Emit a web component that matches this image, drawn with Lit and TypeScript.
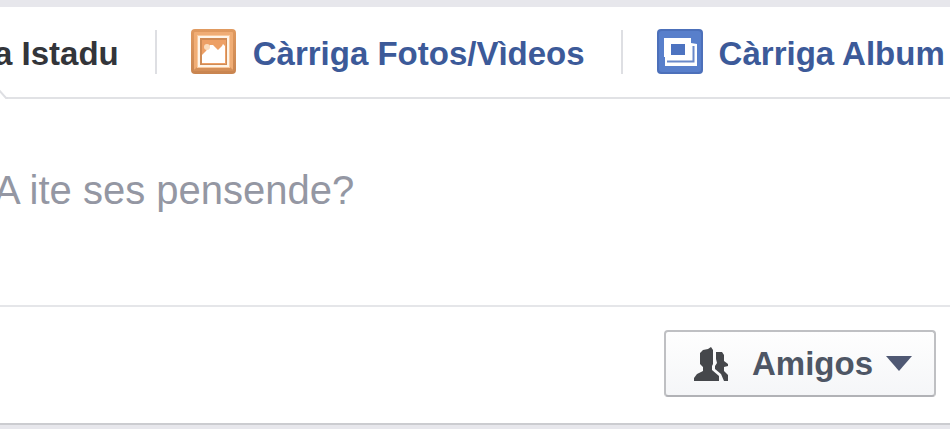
import { LitElement, html, css } from "lit";
import { customElement } from "lit/decorators.js";

@customElement("app-root")
export class AppRoot extends LitElement {
  static styles = css`
    :host {
      display: block;
      box-sizing: border-box;
      min-height: 100vh;
      padding-top: 7px;
      overflow: hidden;
      background: #e7e7ec;
      font-family: "Liberation Sans", Arial, sans-serif;
    }
    .composer {
      margin-left: -10px;
      background: #fff;
      border-bottom: 2px solid #cbccd0;
    }
    .tabs {
      position: relative;
      display: flex;
      align-items: center;
      height: 90px;
      border-bottom: 2px solid #e1e2e5;
    }
    .tab {
      flex: none;
      display: flex;
      align-items: center;
      gap: 16px;
      padding: 0 36px 0 34px;
      font-size: 33px;
      line-height: 40px;
      font-weight: 700;
      color: #3c5a99;
      text-decoration: none;
      white-space: nowrap;
    }
    .tab.current {
      padding-left: 4px;
      color: #33353a;
    }
    .rule {
      flex: none;
      width: 2px;
      height: 44px;
      background: #dedfe3;
    }
    .label {
      padding-top: 4px;
    }
    .icon {
      display: block;
      flex: none;
    }
    .notch {
      position: absolute;
      left: 0;
      bottom: -2px;
    }
    .message {
      display: block;
      box-sizing: border-box;
      width: 100%;
      height: 206px;
      margin: 0;
      padding: 68px 16px 0 4px;
      border: 0;
      outline: 0;
      resize: none;
      overflow: hidden;
      background: transparent;
      font: 400 40px/46px "Liberation Sans", Arial, sans-serif;
      color: #33353a;
    }
    .message::placeholder {
      color: #9497a3;
      opacity: 1;
    }
    .footer {
      display: flex;
      justify-content: flex-end;
      padding: 23px 14px 26px;
      border-top: 2px solid #e5e6e9;
    }
    .audience {
      display: flex;
      align-items: center;
      box-sizing: border-box;
      height: 67px;
      margin: 0;
      padding: 0 22px 0 28px;
      border: 2px solid #bfc0c3;
      border-bottom-color: #b1b2b6;
      border-radius: 4px;
      background: linear-gradient(#fefefe, #f5f6f8);
      font: 700 33px/40px "Liberation Sans", Arial, sans-serif;
      color: #4e5665;
    }
    .people {
      margin-right: 22px;
    }
    .caret {
      margin-left: 13px;
    }
  `;

  render() {
    return html`
      <main class="composer">
        <nav class="tabs">
          <a class="tab current" href="#status" aria-current="page"><span class="label">a Istadu</span></a>
          <span class="rule"></span>
          <a class="tab" href="#photos">
            <svg class="icon" width="46" height="46" viewBox="0 0 46 46" aria-hidden="true">
              <defs>
                <linearGradient id="wood" x1="0" y1="0" x2="0" y2="1">
                  <stop offset="0" stop-color="#e09a60" />
                  <stop offset="1" stop-color="#c98550" />
                </linearGradient>
              </defs>
              <rect x="0" y="0" width="45" height="45" rx="4" fill="url(#wood)" />
              <rect x="3" y="3" width="39" height="38" rx="1" fill="#f0ad75" />
              <path d="M2 42l6-6h29l6 6z" fill="#d48f58" />
              <rect x="6" y="6" width="33" height="33" fill="#f9c99d" />
              <rect x="7" y="7" width="31" height="31" fill="#fff5e9" />
              <rect x="9" y="9" width="27" height="27" fill="#cf8b55" />
              <rect x="11" y="11" width="24" height="24" fill="#eda066" />
              <path d="M11 34V26L15 22L19 16H22L27 21L31 17L32 15L34 17V34z" fill="#fff" />
              <circle cx="16" cy="18" r="3" fill="#fbdcbd" />
            </svg>
            <span class="label">Càrriga Fotos/Vìdeos</span>
          </a>
          <span class="rule"></span>
          <a class="tab" href="#album">
            <svg class="icon" width="46" height="46" viewBox="0 0 46 46" aria-hidden="true">
              <rect x="0" y="0" width="46" height="45" rx="4" fill="#4c70ba" />
              <rect x="2" y="2" width="42" height="41" rx="3" fill="#587fcb" />
              <path d="M7 9H34V14L40 15V37H8V28H7z" fill="#fff" />
              <path d="M36.5 17V32.5H10" fill="none" stroke="#6a89c9" stroke-width="2" />
              <rect x="14" y="15" width="14" height="11" fill="#4d73c0" />
            </svg>
            <span class="label">Càrriga Album</span>
          </a>
          <svg class="notch" width="18" height="12" viewBox="0 0 18 12" aria-hidden="true">
            <path d="M0 0H7L16 10V12H0z" fill="#fff" />
            <path d="M7 1L16 11H18" fill="none" stroke="#dedfe3" stroke-width="2" />
          </svg>
        </nav>
        <textarea class="message" aria-label="A ite ses pensende?" placeholder="A ite ses pensende?"></textarea>
        <div class="footer">
          <button class="audience" type="button" aria-haspopup="true">
            <svg class="icon people" width="36" height="34" viewBox="0 0 36 34" aria-hidden="true">
              <path
                d="M0 34V31L3 27L9 24V20L6 17V6L9 3L14 2L17 0L19 3V17L18 19V23L25 29V34z"
                fill="#45474b"
              />
              <path d="M22 5H28L30 8V14L34 17V19L30 20V24L34 28V34H30L27 27L21 22V19L23 16L22 12z" fill="#45474b" />
            </svg>
            <span>Amigos</span>
            <svg class="icon caret" width="26" height="15" viewBox="0 0 26 15" aria-hidden="true">
              <path d="M0 0H26L13 15z" fill="#4f5873" />
            </svg>
          </button>
        </div>
      </main>
    `;
  }
}
